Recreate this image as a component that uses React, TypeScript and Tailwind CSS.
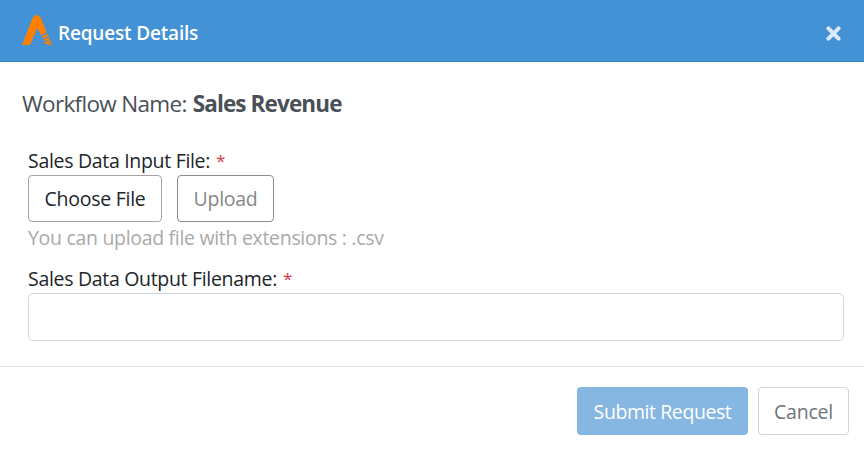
import React from 'react';

function Logo() {
  return (
    <svg className="h-[31px] w-[31px] shrink-0" viewBox="0 0 31 31" fill="#ff8000" aria-hidden="true">
      <path d="M0 30 10.8 2.6Q11.8 0 14.7 0Q17.6 0 18.7 2.6L24 15.4Q24.6 17.4 22.6 18.6L19.2 20.4L15.2 12.8L8 30Z" />
      <path d="M19.8 20.9Q24.6 20.8 24.9 17.6L26 20Q25.6 22.6 20.8 23Z" />
      <path d="M21.2 24Q25.8 23.8 26.4 20.9L27.4 23.2Q27 25.8 22.1 26.1Z" />
      <path d="M22.5 27.1Q27.2 26.8 27.8 24.1L28.8 26.4Q28 29 23.3 29.2Z" />
      <path d="M24.4 30Q28.4 29.4 29.2 27.3L30.4 30Z" />
    </svg>
  );
}

function Label({ children }: { children: React.ReactNode }) {
  return (
    <label className="flex h-[27px] items-center gap-[6px] pb-[2px] text-[19.5px] tracking-[-0.31px] text-[#212529]">
      {children}
      <span className="text-[17px] text-[#dc3545]">*</span>
    </label>
  );
}

export default function App() {
  return (
    <div className="flex h-[449px] w-[864px] flex-col bg-white font-['Open_Sans','Noto_Sans',sans-serif] whitespace-nowrap">
      <header className="flex h-[62px] items-center border-b border-[#3c80b9] bg-[#4492d6] pr-[23px] pl-[22px]">
        <Logo />
        <h1 className="ml-[5px] pt-[5px] text-[19px] font-semibold tracking-[-0.18px] text-white">Request Details</h1>
        <button className="ml-auto pt-[6px]" aria-label="Close">
          <svg className="h-[15px] w-[15px]" viewBox="0 0 15 15" stroke="#dceafa" strokeWidth="4" strokeLinecap="round">
            <path d="M2.4 2.4 12.6 12.6M12.6 2.4 2.4 12.6" />
          </svg>
        </button>
      </header>
      <main className="flex h-[304px] flex-col pr-5 pl-7">
        <h2 className="-ml-[6px] mt-[27px] flex h-[30px] items-center gap-[6px] text-[22.5px] text-[#495057]">
          <span className="tracking-[-0.68px]">Workflow Name:</span>
          <b className="font-bold tracking-[-0.88px]">Sales Revenue</b>
        </h2>
        <div className="mt-[29px]">
          <Label>Sales Data Input File:</Label>
          <div className="flex gap-[15px]">
            <button className="h-[47px] w-[134px] rounded-[4px] border border-[#a3a3a3] pt-px text-[19.5px] tracking-[-0.25px] text-[#212529]">Choose File</button>
            <button className="h-[47px] w-[97px] rounded-[4px] border border-[#8b8b8b] pt-px text-[19.5px] tracking-[-0.3px] text-[#868686]">Upload</button>
          </div>
          <p className="flex h-[32px] items-center text-[19.5px] tracking-[-0.31px] text-[#a9a9a9]">You can upload file with extensions : .csv</p>
        </div>
        <div className="mt-[12px]">
          <Label>Sales Data Output Filename:</Label>
          <input className="block h-[48px] w-full rounded-[5px] border border-[#ced4da]" />
        </div>
      </main>
      <footer className="flex justify-end gap-[10px] border-t border-[#dee2e6] pt-5 pr-[15px]">
        <button className="h-[48px] w-[171px] rounded-[4px] bg-[#86b7e3] pt-px text-[19.5px] font-medium tracking-[-0.42px] text-white">Submit Request</button>
        <button className="h-[48px] w-[91px] rounded-[4px] border border-[#ced4da] pt-px text-[19.5px] tracking-[-0.2px] text-[#6c757d]">Cancel</button>
      </footer>
    </div>
  );
}
